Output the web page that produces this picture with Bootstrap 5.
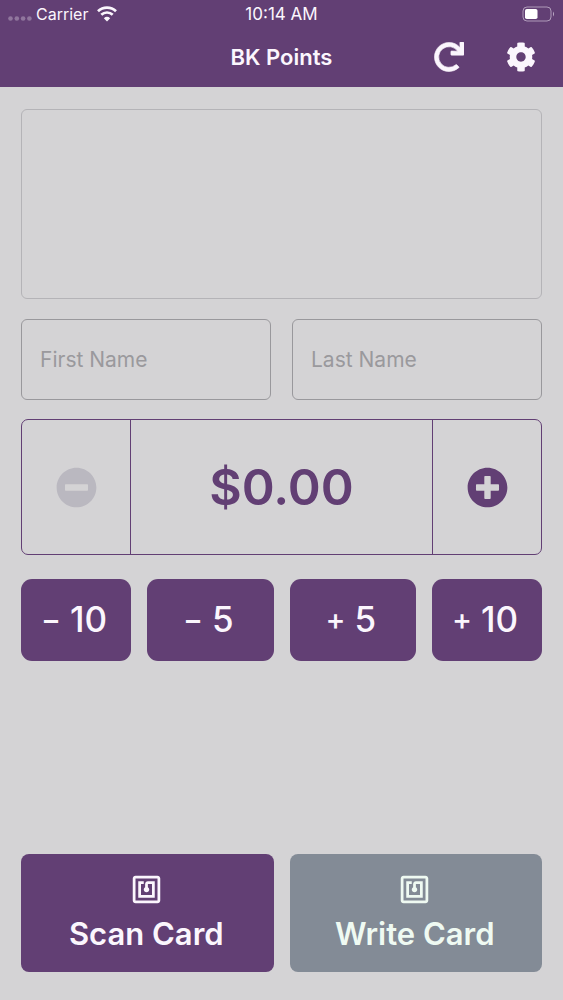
<!DOCTYPE html>
<html lang="en">
<head>
<meta charset="utf-8">
<meta name="viewport" content="width=device-width, initial-scale=1">
<title>BK Points</title>
<link href="https://cdn.jsdelivr.net/npm/bootstrap@5.3.0/dist/css/bootstrap.min.css" rel="stylesheet">
<style>
  :root { --brand: #623f74; --surface: #d4d3d5; --tint: #fbf6fd; }
  body { background: var(--surface); font-family: Inter, "Liberation Sans", sans-serif; }
  svg { display: block; fill: currentColor; }
  .app-header { background: var(--brand); color: var(--tint); }
  .side-grid { display: grid; grid-template-columns: 1fr auto 1fr; align-items: center; }
  .status-row { height: 28px; padding: 0 8px; font-size: 16px; line-height: 28px; }
  .status-row time { font-size: 17px; }
  .title-row { height: 58px; padding: 0 27px; margin-bottom: 1px; }
  .title-row h1 { font-size: 22px; line-height: 28px; font-weight: 600; }
  .title-row nav { gap: 42px; }
  .signal { opacity: .3; margin-top: 9px; }
  .app-main { padding: 22px 21px 28px; }
  .log-panel { height: 190px; border: 1px solid #b4b3b7; border-radius: 6px; }
  .name-row { gap: 21px; margin-top: 20px; }
  .name-row .form-control { height: 81px; padding: 0 18px; background: transparent; border: 1px solid #99989c; border-radius: 6px; font-size: 21px; color: #444; }
  .name-row .form-control::placeholder { color: #9a999d; opacity: 1; }
  .stepper { height: 136px; margin-top: 19px; border: 1px solid var(--brand); border-radius: 7px; color: var(--brand); }
  .stepper .btn { width: 108px; border: 0; border-radius: 0; color: var(--brand); }
  .stepper .btn:disabled { color: #bab8c0; opacity: 1; }
  .stepper output { border: solid var(--brand); border-width: 0 1px; font-size: 50px; font-weight: 600; }
  .quick-row { gap: 16px; margin-top: 24px; }
  .quick-row .btn { height: 82px; flex: 127 1 0; border: 0; border-radius: 11px; background: var(--brand); color: var(--tint); font-size: 35px; line-height: 40px; font-weight: 500; gap: 9px; padding: 0 4px 2px 0; }
  .quick-row .btn.narrow { flex-grow: 110; }
  .quick-row .sign { font-size: 30px; }
  .action-row { gap: 16px; }
  .action-row .btn { height: 118px; flex: 1 1 0; border: 0; border-radius: 8px; background: var(--brand); color: var(--tint); font-size: 31px; line-height: 40px; font-weight: 600; gap: 8px; padding: 0 2px 0 0; }
  .action-row .btn:disabled { background: #838b96; color: #effaf2; opacity: 1; }
</style>
</head>
<body class="min-vh-100 d-flex flex-column">
<header class="app-header">
  <div class="status-row side-grid">
    <div class="d-flex align-items-center">
      <svg class="signal" width="24" height="5" viewBox="0 0 24 5"><circle cx="2.5" cy="2.5" r="2.3"/><circle cx="8.8" cy="2.5" r="2.3"/><circle cx="15.1" cy="2.5" r="2.3"/><circle cx="21.4" cy="2.5" r="2.3"/></svg>
      <span class="ms-1">Carrier</span>
      <svg class="ms-2" width="22" height="16" viewBox="0 0 20 16" fill="none"><path d="M1 5.3a13 13 0 0 1 18 0M4.3 8.8a8.2 8.2 0 0 1 11.4 0" fill="none" stroke="currentColor" stroke-width="2.7"/><path d="M6.8 12.2a4.7 4.7 0 0 1 6.4 0L10 15.5z"/></svg>
    </div>
    <time>10:14 AM</time>
    <svg class="ms-auto" width="33" height="16" viewBox="0 0 33 16"><rect x="1" y="1" width="28" height="14" rx="4" fill="none" stroke="currentColor" stroke-opacity=".5"/><rect x="3" y="3" width="12.5" height="10" rx="1.8" fill="#fff"/><path d="M31 5.5q2 2.5 0 5z" opacity=".6"/></svg>
  </div>
  <div class="title-row side-grid">
    <span></span>
    <h1 class="m-0">BK Points</h1>
    <nav class="d-flex justify-content-end" aria-label="Tools">
      <button type="button" class="btn p-0 border-0 text-reset" aria-label="Refresh"><svg width="30" height="30" viewBox="0 0 512 512"><path d="M500.33 0h-47.41a12 12 0 0 0-12 12.57l4 82.76A247.42 247.42 0 0 0 256 8C119.34 8 7.9 119.53 8 256.19 8.1 393.07 119.1 504 256 504a247.1 247.1 0 0 0 166.18-63.91 12 12 0 0 0 .48-17.43l-34-34a12 12 0 0 0-16.38-.55A176 176 0 1 1 402.1 157.8l-101.53-4.87a12 12 0 0 0-12.57 12v47.41a12 12 0 0 0 12 12h200.33a12 12 0 0 0 12-12V12a12 12 0 0 0-12-12z" stroke="currentColor" stroke-width="10"/></svg></button>
      <button type="button" class="btn p-0 border-0 text-reset" aria-label="Settings"><svg width="30" height="30" viewBox="0 0 512 512"><path d="M487.4 315.7l-42.6-24.6c4.3-23.2 4.3-47 0-70.2l42.6-24.6c4.9-2.8 7.1-8.6 5.5-14-11.1-35.6-30-67.8-54.7-94.6-3.8-4.1-10-5.1-14.8-2.3L380.8 110c-17.9-15.4-38.5-27.3-60.8-35.1V25.8c0-5.6-3.9-10.5-9.4-11.7-36.7-8.2-74.3-7.8-109.2 0-5.5 1.2-9.4 6.1-9.4 11.7V75c-22.2 7.9-42.8 19.8-60.8 35.1L88.7 85.5c-4.9-2.8-11-1.9-14.8 2.3-24.7 26.7-43.6 58.9-54.7 94.6-1.7 5.4.6 11.2 5.5 14L67.3 221c-4.3 23.2-4.3 47 0 70.2l-42.6 24.6c-4.9 2.8-7.1 8.6-5.5 14 11.1 35.6 30 67.8 54.7 94.6 3.8 4.1 10 5.1 14.8 2.3l42.6-24.6c17.9 15.4 38.5 27.3 60.8 35.1v49.2c0 5.6 3.9 10.5 9.4 11.7 36.7 8.2 74.3 7.8 109.2 0 5.5-1.2 9.4-6.1 9.4-11.7v-49.2c22.2-7.9 42.8-19.8 60.8-35.1l42.6 24.6c4.9 2.8 11 1.9 14.8-2.3 24.7-26.7 43.6-58.9 54.7-94.6 1.5-5.5-.7-11.3-5.6-14.1zM256 336c-44.1 0-80-35.9-80-80s35.9-80 80-80 80 35.9 80 80-35.9 80-80 80z"/></svg></button>
    </nav>
  </div>
</header>

<main class="app-main flex-grow-1 d-flex flex-column">
  <section class="log-panel" aria-label="Card details"></section>

  <div class="name-row d-flex">
    <input type="text" class="form-control" placeholder="First Name" aria-label="First Name">
    <input type="text" class="form-control" placeholder="Last Name" aria-label="Last Name">
  </div>

  <div class="stepper d-flex">
    <button type="button" class="btn p-0 d-flex align-items-center justify-content-center" aria-label="Decrease" disabled><svg width="41" height="41" viewBox="0 0 512 512"><path d="M256 8C119 8 8 119 8 256s111 248 248 248 248-111 248-248S393 8 256 8zM124 296c-6.600 0-12-5.400-12-12v-56c0-6.600 5.400-12 12-12h264c6.600 0 12 5.400 12 12v56c0 6.600-5.400 12-12 12H124z"/></svg></button>
    <output class="flex-grow-1 d-flex align-items-center justify-content-center">$0.00</output>
    <button type="button" class="btn p-0 d-flex align-items-center justify-content-center" aria-label="Increase"><svg width="41" height="41" viewBox="0 0 512 512"><path d="M256 8C119 8 8 119 8 256s111 248 248 248 248-111 248-248S393 8 256 8zm144 276c0 6.600-5.400 12-12 12h-92v92c0 6.600-5.400 12-12 12h-56c-6.600 0-12-5.400-12-12v-92h-92c-6.600 0-12-5.400-12-12v-56c0-6.600 5.400-12 12-12h92v-92c0-6.600 5.400-12 12-12h56c6.600 0 12 5.400 12 12v92h92c6.600 0 12 5.400 12 12v56z"/></svg></button>
  </div>

  <div class="quick-row d-flex">
    <button type="button" class="btn narrow d-flex align-items-center justify-content-center"><span class="sign">−</span><span>10</span></button>
    <button type="button" class="btn d-flex align-items-center justify-content-center"><span class="sign">−</span><span>5</span></button>
    <button type="button" class="btn d-flex align-items-center justify-content-center"><span class="sign">+</span><span>5</span></button>
    <button type="button" class="btn narrow d-flex align-items-center justify-content-center"><span class="sign">+</span><span>10</span></button>
  </div>

  <div class="action-row d-flex mt-auto">
    <button type="button" class="btn d-flex flex-column align-items-center justify-content-center"><svg width="33" height="33" viewBox="0 0 24 24"><path d="M20 2H4c-1.100 0-2 .9-2 2v16c0 1.100.9 2 2 2h16c1.100 0 2-.9 2-2V4c0-1.100-.9-2-2-2zm0 18H4V4h16v16zM18 6h-5c-1.100 0-2 .9-2 2v2.280c-.6.350-1 .980-1 1.720 0 1.100.9 2 2 2s2-.9 2-2c0-.740-.4-1.380-1-1.720V8h3v8H8V8h2V6H6v12h12V6z"/></svg><span>Scan Card</span></button>
    <button type="button" class="btn d-flex flex-column align-items-center justify-content-center" disabled><svg width="33" height="33" viewBox="0 0 24 24"><path d="M20 2H4c-1.100 0-2 .9-2 2v16c0 1.100.9 2 2 2h16c1.100 0 2-.9 2-2V4c0-1.100-.9-2-2-2zm0 18H4V4h16v16zM18 6h-5c-1.100 0-2 .9-2 2v2.280c-.6.350-1 .980-1 1.720 0 1.100.9 2 2 2s2-.9 2-2c0-.740-.4-1.380-1-1.720V8h3v8H8V8h2V6H6v12h12V6z"/></svg><span>Write Card</span></button>
  </div>
</main>
<script src="https://cdn.jsdelivr.net/npm/bootstrap@5.3.0/dist/js/bootstrap.bundle.min.js"></script>
</body>
</html>
